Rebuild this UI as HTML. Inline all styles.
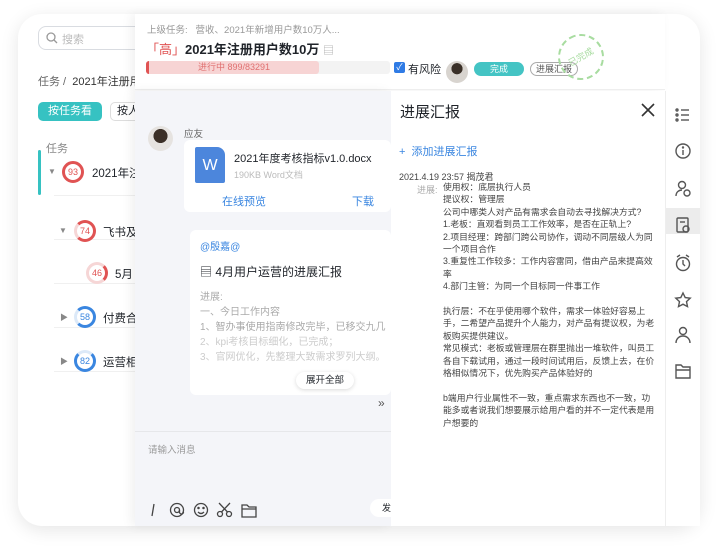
<!DOCTYPE html>
<html><head><meta charset="utf-8"><style>
*{margin:0;padding:0;box-sizing:border-box}
body{width:720px;height:550px;background:#fff;font-family:"Liberation Sans","Noto Sans CJK SC",sans-serif;position:relative;overflow:hidden;color:#1f2329}
.a{position:absolute}
.card{left:18px;top:14px;width:682px;height:512px;border-radius:24px;background:#fff;box-shadow:0 4px 18px rgba(0,0,0,.10);overflow:hidden}
.t{white-space:nowrap}
.ring{border-radius:50%;width:22px;height:22px;font-size:9px;text-align:center;line-height:16px}
.ic{stroke:#555;fill:none;stroke-width:1.4}
</style></head><body>
<div class="a card">
 <div class="a" style="left:20px;top:12px;width:120px;height:24px;border:1px solid #d9dce1;border-radius:8px"></div>
 <svg class="a" style="left:28px;top:18px" width="12" height="12"><circle cx="5" cy="5" r="4" stroke="#999" fill="none" stroke-width="1.3"/><line x1="8" y1="8" x2="11" y2="11" stroke="#999" stroke-width="1.3"/></svg>
 <div class="a t" style="left:44px;top:17px;font-size:11px;color:#bbb">搜索</div>
 <div class="a t" style="left:20px;top:59px;font-size:11px;color:#666">任务 / &nbsp;<span style="color:#333">2021年注册用</span></div>
 <div class="a t" style="left:20px;top:88px;width:64px;height:19px;border-radius:5px;background:#36c2c2;color:#fff;font-size:11px;text-align:center;line-height:19px">按任务看</div>
 <div class="a t" style="left:92px;top:88px;width:40px;height:19px;border:1px solid #ddd;border-radius:5px;font-size:11px;line-height:17px;padding-left:6px">按人</div>
 <div class="a t" style="left:28px;top:126px;font-size:11px;color:#888">任务</div>
 <div class="a" style="left:20px;top:136px;width:3px;height:45px;background:#36c2c2;border-radius:2px"></div>
 <div class="a" style="left:36px;top:181px;width:100px;height:1px;background:#f0f0f0"></div>
 <div class="a" style="left:36px;top:225px;width:100px;height:1px;background:#f0f0f0"></div>
 <div class="a" style="left:36px;top:269px;width:100px;height:1px;background:#f0f0f0"></div>
 <div class="a" style="left:36px;top:313px;width:100px;height:1px;background:#f0f0f0"></div>
 <div class="a" style="left:36px;top:357px;width:100px;height:1px;background:#f0f0f0"></div>
 <div class="a t" style="left:30px;top:153px;font-size:8px;color:#888">▼</div>
 <div class="a ring" style="left:44px;top:147px;border:3px solid #e05353;color:#e05353">93</div>
 <div class="a t" style="left:74px;top:151px;font-size:11.5px">2021年注</div>
 <div class="a t" style="left:41px;top:212px;font-size:8px;color:#888">▼</div>
 <div class="a ring" style="left:56px;top:206px;border:3px solid #e05353;border-left-color:#f6d6d6;color:#e05353">74</div>
 <div class="a t" style="left:85px;top:210px;font-size:11.5px">飞书及</div>
 <div class="a ring" style="left:68px;top:248px;border:3px solid #f6d6d6;border-right-color:#e05353;color:#e05353">46</div>
 <div class="a t" style="left:97px;top:252px;font-size:11.5px">5月</div>
 <div class="a t" style="left:42px;top:298px;font-size:8px;color:#888">▶</div>
 <div class="a ring" style="left:56px;top:292px;border:3px solid #3a86e0;border-left-color:#dce9f8;color:#3a86e0">58</div>
 <div class="a t" style="left:85px;top:296px;font-size:11.5px">付费合</div>
 <div class="a t" style="left:42px;top:342px;font-size:8px;color:#888">▶</div>
 <div class="a ring" style="left:56px;top:336px;border:3px solid #3a86e0;border-top-color:#dce9f8;color:#3a86e0">82</div>
 <div class="a t" style="left:85px;top:340px;font-size:11.5px">运营相</div>
</div>

<div class="a" style="left:135px;top:14px;width:530px;height:76px;background:#fff;border-bottom:1px solid #eee;box-shadow:-4px 0 10px rgba(0,0,0,.06)"></div>
<div class="a t" style="left:147px;top:22px;font-size:9.5px;color:#999">上级任务: &nbsp;&nbsp;营收、2021年新增用户数10万人...</div>
<div class="a t" style="left:146px;top:39px;font-size:13px;font-weight:bold"><span style="color:#e05353;font-weight:normal">「高」</span>2021年注册用户数10万 <span style="color:#aaa;font-weight:normal;font-size:11px">▤</span></div>
<div class="a" style="left:146px;top:61px;width:244px;height:13px;background:#f3f3f3;border-radius:3px"></div>
<div class="a t" style="left:146px;top:61px;width:173px;height:13px;background:#f7d4d4;border-left:3px solid #e05353;border-radius:3px;color:#e07070;font-size:9px;text-align:center;line-height:13px">进行中 899/83291</div>
<div class="a" style="left:394px;top:62px;width:11px;height:11px;background:#2f7be5;border-radius:2px;color:#fff;font-size:9px;line-height:11px;text-align:center">✓</div>
<div class="a t" style="left:408px;top:61px;font-size:11px">有风险</div>
<div class="a" style="left:446px;top:61px;width:22px;height:22px;border-radius:50%;background:radial-gradient(circle at 50% 35%,#3a3028 30%,#d8d4cf 32%);"></div>
<div class="a" style="left:474px;top:62px;width:50px;height:14px;border-radius:7px;background:#44c4c4;color:#fff;font-size:9px;text-align:center;line-height:14px">完成</div>
<div class="a" style="left:530px;top:62px;width:48px;height:14px;border-radius:7px;border:1px solid #aaa;font-size:9px;text-align:center;line-height:12px;color:#555">进展汇报</div>
<div class="a" style="left:558px;top:34px;width:46px;height:46px;border-radius:50%;border:2px dashed #a8dca0;transform:rotate(-30deg);color:#a8dca0;font-size:9px;text-align:center;line-height:42px">已完成</div>

<div class="a" style="left:135px;top:91px;width:256px;height:435px;background:#f4f5f9;box-shadow:-4px 0 10px rgba(0,0,0,.06)"></div>
<div class="a" style="left:148px;top:126px;width:25px;height:25px;border-radius:50%;background:radial-gradient(circle at 50% 40%,#3b2f27 35%,#e6e3e0 37%)"></div>
<div class="a t" style="left:184px;top:126px;font-size:9.5px;color:#666">应友</div>
<div class="a" style="left:184px;top:140px;width:207px;height:72px;background:#fff;border-radius:6px"></div>
<div class="a" style="left:195px;top:147px;width:30px;height:36px;background:#4c86dc;border-radius:2px 8px 2px 2px;color:#fff;font-size:16px;text-align:center;line-height:38px">W</div>
<div class="a t" style="left:234px;top:150px;font-size:11px">2021年度考核指标v1.0.docx</div>
<div class="a t" style="left:234px;top:168px;font-size:9px;color:#bbb">190KB Word文档</div>
<div class="a t" style="left:222px;top:193px;font-size:11px;color:#3a86e0">在线预览</div>
<div class="a t" style="left:352px;top:193px;font-size:11px;color:#3a86e0">下载</div>
<div class="a" style="left:190px;top:230px;width:201px;height:165px;background:#fff;border-radius:6px"></div>
<div class="a t" style="left:200px;top:238px;font-size:10px;color:#3a86e0">@殷嘉@</div>
<div class="a t" style="left:200px;top:263px;font-size:12px">▤ 4月用户运营的进展汇报</div>
<div class="a" style="left:200px;top:290px;font-size:10px;color:#aaa;line-height:15px;white-space:nowrap;width:191px;overflow:hidden">进展:<br>一、今日工作内容<br>1、智办事使用指南修改完毕，已移交九几<br><span style="color:#ccc">2、kpi考核目标细化，已完成；<br>3、官网优化，先整理大致需求罗列大纲。</span></div>
<div class="a t" style="left:296px;top:372px;width:58px;height:17px;border-radius:9px;background:#fff;box-shadow:0 1px 4px rgba(0,0,0,.15);font-size:9.5px;text-align:center;line-height:17px">展开全部</div>
<div class="a t" style="left:378px;top:396px;font-size:12px;color:#555">»</div>
<div class="a" style="left:135px;top:431px;width:256px;height:1px;background:#e6e7ea"></div>
<div class="a t" style="left:148px;top:442px;font-size:9.5px;color:#999">请输入消息</div>
<svg class="a" style="left:148px;top:500px" width="110" height="20"><g stroke="#444" fill="none" stroke-width="1.3">
<line x1="6" y1="4" x2="4" y2="16"/>
<circle cx="29" cy="10" r="6.5"/><circle cx="29" cy="10" r="2.5"/><path d="M31.5 10v2a2 2 0 0 0 4 0"/>
<circle cx="53" cy="10" r="6.5"/><circle cx="50.5" cy="8" r=".6"/><circle cx="55.5" cy="8" r=".6"/><path d="M50 12q3 3 6 0"/>
<circle cx="72" cy="14" r="2.5"/><circle cx="81" cy="14" r="2.5"/><path d="M73.5 12L82 3M79.5 12L71 3"/>
<path d="M94 5h5l2 2h7v10H94zM94 9h14"/></g></svg>
<div class="a" style="left:370px;top:499px;width:30px;height:18px;border-radius:9px;background:#fff;font-size:9px;line-height:18px;padding-left:12px">发</div>

<div class="a" style="left:391px;top:91px;width:274px;height:435px;background:#fff"></div>
<div class="a t" style="left:400px;top:101px;font-size:15px">进展汇报</div>
<svg class="a" style="left:641px;top:103px" width="14" height="14"><path d="M1 1L13 13M13 1L1 13" stroke="#333" stroke-width="1.6"/></svg>
<div class="a t" style="left:399px;top:143px;font-size:11px;color:#3a86e0">+ &nbsp;添加进展汇报</div>
<div class="a t" style="left:399px;top:170px;font-size:9px;color:#444">2021.4.19 23:57 揭茂君</div>
<div class="a t" style="left:417px;top:183px;font-size:9px;color:#aaa">进展:</div>
<div class="a" style="left:443px;top:181px;width:213px;font-size:8.8px;line-height:12.4px;color:#444">使用权：底层执行人员<br>提议权：管理层<br>公司中哪类人对产品有需求会自动去寻找解决方式?<br>1.老板：直观看到员工工作效率，是否在正轨上?<br>2.项目经理：跨部门跨公司协作，调动不同层级人为同<br>一个项目合作<br>3.重复性工作较多：工作内容雷同，借由产品来提高效<br>率<br>4.部门主管：为同一个目标同一件事工作<br><br>执行层：不在乎使用哪个软件，需求一体验好容易上<br>手，二希望产品提升个人能力，对产品有提议权，为老<br>板购买提供建议。<br>常见模式：老板或管理层在群里抛出一堆软件，叫员工<br>各自下载试用，通过一段时间试用后，反馈上去，在价<br>格相似情况下，优先购买产品体验好的<br><br>b端用户行业属性不一致，重点需求东西也不一致，功<br>能多或者说我们想要展示给用户看的并不一定代表是用<br>户想要的</div>

<div class="a" style="left:665px;top:91px;width:35px;height:435px;background:#fff;border-left:1px solid #eee"></div>
<div class="a" style="left:666px;top:208px;width:34px;height:26px;background:#ececec"></div>
<svg class="a" style="left:674px;top:106px" width="18" height="300">
 <g class="ic"><line x1="7" y1="4" x2="15" y2="4"/><line x1="7" y1="9" x2="15" y2="9"/><line x1="7" y1="14" x2="15" y2="14"/><circle cx="3" cy="4" r="1"/><circle cx="3" cy="9" r="1"/><circle cx="3" cy="14" r="1"/></g>
 <g class="ic" transform="translate(0,36)"><circle cx="9" cy="9" r="7"/><line x1="9" y1="8" x2="9" y2="13"/><circle cx="9" cy="5.5" r=".5"/></g>
 <g class="ic" transform="translate(0,74)"><circle cx="8" cy="5" r="3.5"/><path d="M2 16c0-4 3-6 6-6"/><circle cx="13" cy="13" r="3"/></g>
 <g class="ic" transform="translate(0,110)"><rect x="3" y="2" width="11" height="14" rx="1"/><line x1="6" y1="6" x2="11" y2="6"/><circle cx="12" cy="13" r="3"/></g>
 <g class="ic" transform="translate(0,148)"><circle cx="9" cy="10" r="6.5"/><path d="M9 6v4l2 2M3 3l3-2M15 3l-3-2"/></g>
 <g class="ic" transform="translate(0,185)"><path d="M9 2l2.2 4.6 5 .6-3.7 3.4 1 5L9 13.2 4.5 15.6l1-5L1.8 7.2l5-.6z"/></g>
 <g class="ic" transform="translate(0,220)"><circle cx="9" cy="5" r="3.5"/><path d="M2 17c0-4 3-7 7-7s7 3 7 7"/></g>
 <g class="ic" transform="translate(0,256)"><path d="M2 3h5l2 2h7v11H2zM2 8h14"/></g>
</svg>
</body></html>
